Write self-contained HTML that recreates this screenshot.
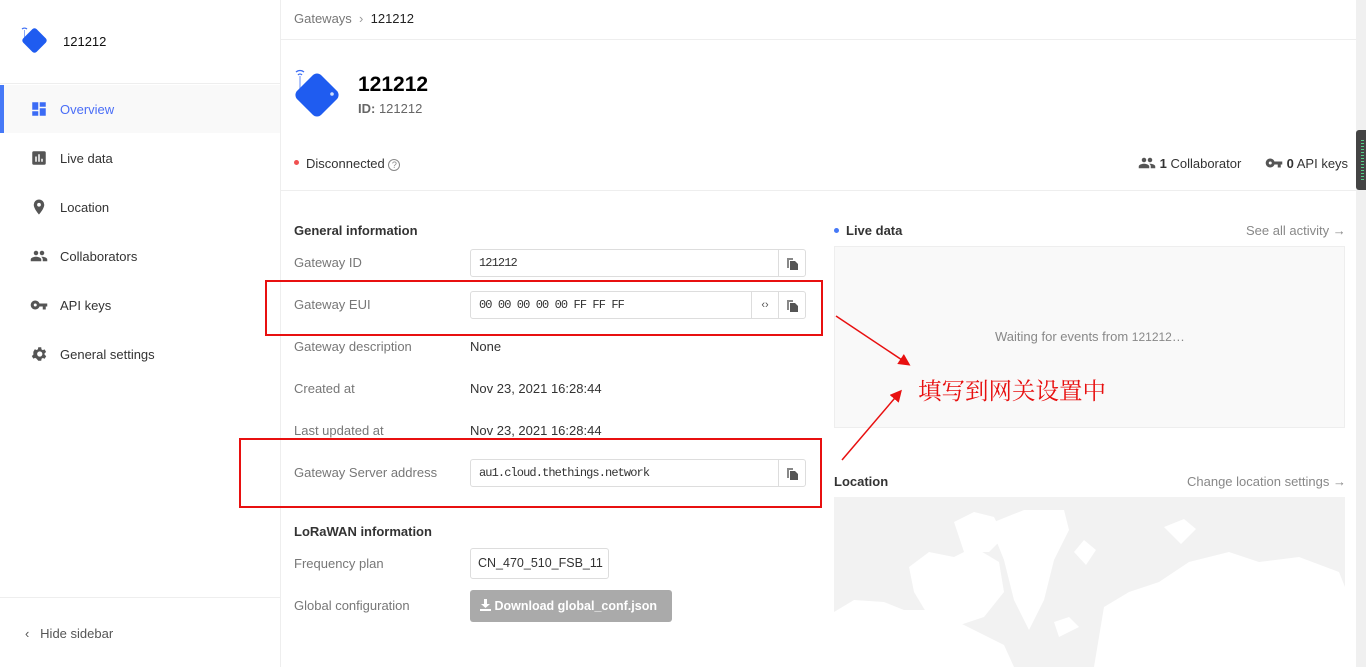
<!DOCTYPE html>
<html><head><meta charset="utf-8"><style>
*{box-sizing:border-box;margin:0;padding:0}
body{width:1366px;height:667px;overflow:hidden;background:#fff;font-family:"Liberation Sans",sans-serif;color:#333;font-size:13px;position:relative}
.a{position:absolute;white-space:nowrap}
.side{position:absolute;left:0;top:0;width:281px;height:667px;border-right:1px solid #eee}
.nav{position:absolute;left:0;width:280px;height:48px;display:flex;align-items:center;padding-left:30px;font-size:13px;color:#333}
.nav svg{width:18px;height:18px;margin-right:12px;fill:#555}
.lbl{position:absolute;left:294px;color:#777;font-size:13px}
.val{position:absolute;left:470px;font-size:13px;color:#333}
.inp{position:absolute;left:470px;width:336px;height:28px;border:1px solid #ddd;border-radius:3px;font-family:"Liberation Mono",monospace;font-size:12px;letter-spacing:-0.9px;padding-left:8px;line-height:26px;color:#333}
.btn{position:absolute;top:0;width:27px;height:26px;border-left:1px solid #ddd;display:flex;align-items:center;justify-content:center;letter-spacing:0}
.red{position:absolute;border:2px solid #e81010}
</style></head><body>
<div class="side">
 <svg class="a" style="left:18px;top:24px" width="34" height="34" viewBox="0 0 34 34"><path d="M4 5a4 4 0 0 1 5 0" stroke="#3a6cf4" fill="none" stroke-width="1.2"/><line x1="6.5" y1="6" x2="6.5" y2="14" stroke="#8aa8f8"/><rect x="7" y="7" width="19" height="19" rx="3" transform="rotate(45 16.5 16.5)" fill="#1f5cf0"/></svg>
 <div class="a" style="left:63px;top:34px;font-size:13px;color:#111">121212</div>
 <div class="a" style="left:0;top:83px;width:280px;border-top:1px solid #eee"></div>
 <div class="nav" style="top:85px;background:#f9f9f9;border-left:4px solid #4679f7;padding-left:26px;color:#4a6ef7"><svg viewBox="0 0 24 24" style="fill:#3b6bf5"><path d="M3 13h8V3H3zm0 8h8v-6H3zm10 0h8V11h-8zm0-18v6h8V3z"/></svg>Overview</div>
 <div class="nav" style="top:134px"><svg viewBox="0 0 24 24"><path d="M19 3H5a2 2 0 0 0-2 2v14a2 2 0 0 0 2 2h14a2 2 0 0 0 2-2V5a2 2 0 0 0-2-2zM9 17H7v-7h2zm4 0h-2V7h2zm4 0h-2v-4h2z"/></svg>Live data</div>
 <div class="nav" style="top:183px"><svg viewBox="0 0 24 24"><path d="M12 2a7 7 0 0 0-7 7c0 5.25 7 13 7 13s7-7.75 7-13a7 7 0 0 0-7-7zm0 9.5a2.5 2.5 0 1 1 0-5 2.5 2.5 0 0 1 0 5z"/></svg>Location</div>
 <div class="nav" style="top:232px"><svg viewBox="0 0 24 24"><path d="M16 11a3 3 0 1 0 0-6 3 3 0 0 0 0 6zm-8 0a3 3 0 1 0 0-6 3 3 0 0 0 0 6zm0 2c-2.3 0-7 1.2-7 3.5V19h14v-2.5C15 14.2 10.3 13 8 13zm8 0c-.3 0-.6 0-1 .1 1.2.8 2 2 2 3.4V19h6v-2.5c0-2.3-4.7-3.5-7-3.5z"/></svg>Collaborators</div>
 <div class="nav" style="top:281px"><svg viewBox="0 0 24 24"><path d="M12.6 10A6 6 0 1 0 12.6 14H17v4h4v-4h2v-4zM7 14a2 2 0 1 1 0-4 2 2 0 0 1 0 4z"/></svg>API keys</div>
 <div class="nav" style="top:330px"><svg viewBox="0 0 24 24"><path d="M19.4 13a7.5 7.5 0 0 0 0-2l2.1-1.6-2-3.5-2.5 1a7 7 0 0 0-1.700-1L15 3h-4l-.4 2.7a7 7 0 0 0-1.7 1l-2.5-1-2 3.5L4.5 11a7.5 7.5 0 0 0 0 2l-2.100 1.6 2 3.5 2.5-1a7 7 0 0 0 1.7 1L11 21h4l.4-2.7a7 7 0 0 0 1.7-1l2.5 1 2-3.5zM13 15.500a3.5 3.5 0 1 1 0-7 3.5 3.5 0 0 1 0 7z"/></svg>General settings</div>
 <div class="a" style="left:0;top:597px;width:280px;border-top:1px solid #eee"></div>
 <div class="a" style="left:25px;top:626px;color:#555;font-size:13px">‹&nbsp;&nbsp; Hide sidebar</div>
</div>

<div class="a" style="left:294px;top:11px;color:#777">Gateways &nbsp;<span style="color:#999">›</span>&nbsp; <span style="color:#222">121212</span></div>
<div class="a" style="left:281px;top:39px;width:1075px;border-top:1px solid #eee"></div>
<svg class="a" style="left:292px;top:66px" width="54" height="58" viewBox="0 0 54 58"><path d="M4 6a6 6 0 0 1 8 0M6 9a2.5 2.5 0 0 1 4 0" stroke="#3a6cf4" fill="none" stroke-width="1.3"/><line x1="8" y1="10" x2="8" y2="24" stroke="#8aa8f8" stroke-width="1.3"/><rect x="8" y="12" width="34" height="34" rx="6" transform="rotate(45 25 29)" fill="#1f5cf0"/><circle cx="40" cy="28" r="1.8" fill="#cfe0ff"/></svg>
<div class="a" style="left:358px;top:73px;font-size:21px;font-weight:bold;color:#000">121212</div>
<div class="a" style="left:358px;top:101px;font-size:13px;color:#666"><b>ID:</b> 121212</div>
<div class="a" style="left:294px;top:160px;width:5px;height:5px;border-radius:50%;background:#f05050"></div>
<div class="a" style="left:306px;top:156px;color:#333">Disconnected <span style="display:inline-block;width:12px;height:12px;border:1px solid #888;border-radius:50%;font-size:9px;line-height:10px;text-align:center;color:#888">?</span></div>
<div class="a" style="left:1138px;top:156px;color:#333"><svg width="18" height="14" viewBox="0 0 24 18" style="vertical-align:-2px;fill:#555"><path d="M16 8a3 3 0 1 0 0-6 3 3 0 0 0 0 6zm-8 0a3 3 0 1 0 0-6 3 3 0 0 0 0 6zm0 2c-2.3 0-7 1.2-7 3.5V16h14v-2.5C15 11.2 10.3 10 8 10zm8 0h-1c1.2.8 2 2 2 3.4V16h6v-2.5c0-2.3-4.7-3.5-7-3.5z"/></svg> <b>1</b> Collaborator</div>
<div class="a" style="left:1265px;top:156px;color:#333"><svg width="18" height="12" viewBox="0 0 24 14" style="vertical-align:-1px;fill:#555"><path d="M12.6 5A6 6 0 1 0 12.6 9H17v4h4V9h2V5zM7 9a2 2 0 1 1 0-4 2 2 0 0 1 0 4z"/></svg> <b>0</b> API keys</div>
<div class="a" style="left:281px;top:190px;width:1075px;border-top:1px solid #eee"></div>

<div class="a" style="left:294px;top:223px;font-weight:bold;color:#333">General information</div>
<div class="lbl" style="top:255px">Gateway ID</div>
<div class="inp" style="top:249px">121212<div class="btn" style="right:0"><svg width="12" height="13" viewBox="0 0 12 13"><path d="M1 1h6v2H3v8H1z" fill="#888"/><path d="M4 4h5l3 3v6H4z" fill="#555"/></svg></div></div>
<div class="lbl" style="top:297px">Gateway EUI</div>
<div class="inp" style="top:291px">00 00 00 00 00 FF FF FF<div class="btn" style="right:27px;font-family:'Liberation Sans';font-size:11px;color:#555">‹›</div><div class="btn" style="right:0"><svg width="12" height="13" viewBox="0 0 12 13"><path d="M1 1h6v2H3v8H1z" fill="#888"/><path d="M4 4h5l3 3v6H4z" fill="#555"/></svg></div></div>
<div class="lbl" style="top:339px">Gateway description</div><div class="val" style="top:339px">None</div>
<div class="lbl" style="top:381px">Created at</div><div class="val" style="top:381px">Nov 23, 2021 16:28:44</div>
<div class="lbl" style="top:423px">Last updated at</div><div class="val" style="top:423px">Nov 23, 2021 16:28:44</div>
<div class="lbl" style="top:465px">Gateway Server address</div>
<div class="inp" style="top:459px">au1.cloud.thethings.network<div class="btn" style="right:0"><svg width="12" height="13" viewBox="0 0 12 13"><path d="M1 1h6v2H3v8H1z" fill="#888"/><path d="M4 4h5l3 3v6H4z" fill="#555"/></svg></div></div>
<div class="a" style="left:294px;top:524px;font-weight:bold;color:#333">LoRaWAN information</div>
<div class="lbl" style="top:556px">Frequency plan</div>
<div class="a" style="left:470px;top:548px;width:139px;height:31px;border:1px solid #ddd;border-radius:3px;padding-left:7px;line-height:29px;color:#333;font-size:12.5px">CN_470_510_FSB_11</div>
<div class="lbl" style="top:598px">Global configuration</div>
<div class="a" style="left:470px;top:590px;width:202px;height:32px;background:#aaa;border-radius:3px;color:#fff;font-weight:bold;line-height:32px;padding-left:10px;font-size:12.5px"><svg width="11" height="12" viewBox="0 0 11 12" style="vertical-align:-1px"><path d="M4 0h3v5h3L5.5 9 1 5h3zM0 10h11v2H0z" fill="#fff"/></svg> Download global_conf.json</div>

<div class="a" style="left:834px;top:228px;width:5px;height:5px;border-radius:50%;background:#4679f7"></div>
<div class="a" style="left:846px;top:223px;font-weight:bold;color:#333">Live data</div>
<div class="a" style="left:1246px;top:223px;color:#888">See all activity →</div>
<div class="a" style="left:834px;top:246px;width:511px;height:182px;background:#f9f9f9;border:1px solid #eee"></div>
<div class="a" style="left:995px;top:329px;color:#888">Waiting for events from <span style="font-size:12px">121212</span>…</div>
<div class="a" style="left:834px;top:474px;font-weight:bold;color:#333">Location</div>
<div class="a" style="left:1187px;top:474px;color:#888">Change location settings →</div>
<svg class="a" style="left:834px;top:497px" width="511" height="170" viewBox="0 0 511 170"><rect width="511" height="170" fill="#f2f2f2"/><g fill="#fff"><path d="M0 115l20-12 30 2 20 8 30 0 40 20 30 15 10 22H0z"/><path d="M75 70l20-15 25 5 20-10 25 15 5 30-20 25-30 10-25-10-15-25z"/><path d="M120 25l20-10 20 5 10 20-15 15-25 0z"/><path d="M160 25l30-12 40 0 5 20-15 30-10 40-15 30-15-30-10-40-10-25z"/><path d="M240 55l10-12 12 10-10 15z"/><path d="M270 110l25-15 30-10 30-20 40-10 30 10 40-5 40 15 6 15v80H260z"/><path d="M330 30l20-8 12 10-15 15z"/><path d="M220 125l15-5 10 10-20 10z"/></g></svg>

<div class="red" style="left:265px;top:280px;width:558px;height:56px"></div>
<div class="red" style="left:239px;top:438px;width:583px;height:70px"></div>
<svg class="a" style="left:830px;top:310px" width="90" height="160"><defs><marker id="m" markerWidth="8" markerHeight="8" refX="6" refY="4" orient="auto"><path d="M0 0L8 4L0 8z" fill="#e81010"/></marker></defs><line x1="6" y1="6" x2="78" y2="54" stroke="#e81010" stroke-width="1.5" marker-end="url(#m)"/><line x1="12" y1="150" x2="70" y2="82" stroke="#e81010" stroke-width="1.5" marker-end="url(#m)"/></svg>
<div class="a" style="left:918px;top:372px;font-size:23.5px;color:#e81010;font-family:'Noto Serif CJK SC',serif">填写到网关设置中</div>

<div class="a" style="left:1356px;top:0;width:10px;height:667px;background:#f0f0f0"></div>
<div class="a" style="left:1356px;top:130px;width:10px;height:60px;background:#444;border-radius:3px 0 0 3px"></div>
<div class="a" style="left:1361px;top:140px;width:3px;height:42px;background:repeating-linear-gradient(#5c8 0 1px,#444 1px 3px)"></div>
</body></html>
